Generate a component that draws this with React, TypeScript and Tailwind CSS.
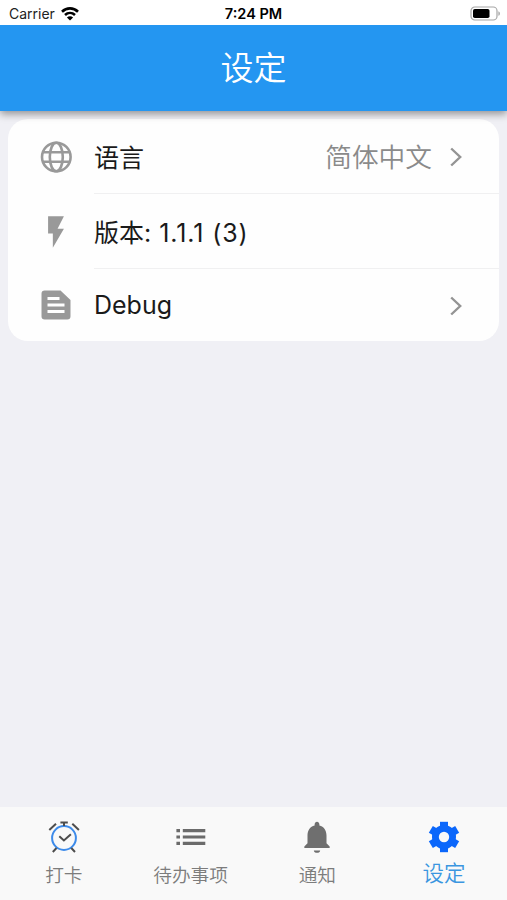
import clsx from "clsx";
import type { ReactNode } from "react";

interface SettingRowProps {
  icon: ReactNode;
  label: ReactNode;
  value?: string;
  hasLink?: boolean;
  isLast?: boolean;
}

interface TabProps {
  icon: ReactNode;
  label: string;
  active?: boolean;
}

const WifiIcon = () => (
  <svg width="18" height="14" viewBox="0 0 18 14" fill="none">
    <path
      d="M1 4.7C5.6.3 12.4.3 17 4.7M4 8c2.9-2.7 7.1-2.7 10 0"
      stroke="#000"
      strokeWidth="2.6"
    />
    <path d="M9 13.5 5.9 10.4c1.8-1.6 4.4-1.6 6.2 0z" fill="#000" />
  </svg>
);

const BatteryIcon = () => (
  <svg width="31" height="15" viewBox="0 0 31 15" fill="none">
    <rect x="1" y="1" width="26" height="13" rx="3.8" stroke="#a6a6a6" strokeWidth="1.2" />
    <rect x="3" y="3" width="16.5" height="9" rx="1.8" fill="#000" />
    <path d="M28.4 5.2c2 .8 2 3.8 0 4.6z" fill="#a6a6a6" />
  </svg>
);

const GlobeIcon = () => (
  <svg width="32" height="32" viewBox="0 0 32 32" fill="none" stroke="#999" strokeWidth="2.6">
    <circle cx="16.3" cy="16" r="14.3" />
    <ellipse cx="16.3" cy="16" rx="6.5" ry="14.3" />
    <path d="M3 11.2h26.6M3 20.8h26.6" />
  </svg>
);

const FlashIcon = () => (
  <svg width="38" height="38" viewBox="0 0 24 24" fill="#999">
    <path d="M7 2v11h3v9l7-12h-4l4-8z" />
  </svg>
);

const DocumentIcon = () => (
  <svg width="30" height="30" viewBox="0 0 30 30">
    <path
      d="M3.8.5h15.7L29.5 10v16.2a3.3 3.3 0 0 1-3.3 3.3H3.8a3.3 3.3 0 0 1-3.3-3.3V3.8A3.3 3.3 0 0 1 3.8.5z"
      fill="#999"
    />
    <path d="M6.5 8.5h12M6.5 15h17M6.5 21.5h17" stroke="#fff" strokeWidth="3" />
  </svg>
);

const ChevronIcon = () => (
  <svg width="12" height="20" viewBox="0 0 12 20" fill="none">
    <path d="m1.2 1.5 9 8.5-9 8.5" stroke="#949494" strokeWidth="2.4" />
  </svg>
);

const ClockIcon = () => (
  <svg width="32" height="32" viewBox="0 0 32 32" fill="none">
    <circle cx="16" cy="17" r="11.9" stroke="#3d8bea" strokeWidth="2" />
    <path
      d="M12.4 1.5h7.4M16 1.5v3.4M1.3 9 8 2.8M24.3 2.8l6.6 6.2M8.5 27l-3.7 4M23.3 27l3.7 4M11.3 15.2l4.6 4.3 7-6.3"
      stroke="#4d4d4d"
      strokeWidth="2"
    />
  </svg>
);

const ListIcon = () => (
  <svg width="30" height="32" viewBox="0 0 30 32">
    <path
      d="M.4 8.1H4v3.2H.4zM6.8 8.1h22.5v3.2H6.8zM.4 14.4H4v3.2H.4zM6.8 14.4h22.5v3.2H6.8zM.4 20.7H4v3.2H.4zM6.8 20.7h22.5v3.2H6.8z"
      fill="#6b6b6b"
    />
  </svg>
);

const BellIcon = () => (
  <svg width="38" height="38" viewBox="0 0 24 24" fill="#6f6f6f">
    <path d="M12 22c1.1 0 2-.7 2-1.5h-4c0 .8.9 1.5 2 1.5zm6-6v-5c0-3.1-1.6-5.6-4.5-6.3V4c0-.8-.7-1.7-1.5-1.7s-1.5.9-1.5 1.7v.7C7.6 5.4 6 7.9 6 11v5l-2 2v1h16v-1z" />
  </svg>
);

// hub and six square-ended teeth, one pair per bar
const GearIcon = () => (
  <svg width="32" height="32" viewBox="0 0 32 32">
    <g stroke="#0b67fb" strokeWidth="8">
      <path d="M16 .8v30.4" />
      <path d="M16 .8v30.4" transform="rotate(60 16 16)" />
      <path d="M16 .8v30.4" transform="rotate(120 16 16)" />
    </g>
    <circle cx="16" cy="16" r="12" fill="#0b67fb" />
    <circle cx="16" cy="16" r="5.2" fill="#f9f9f9" />
  </svg>
);

const StatusBar = () => (
  <div className="relative z-20 grid h-[25px] shrink-0 grid-cols-3 items-center bg-white px-1.5 pt-0.5 text-[#222]">
    <div className="flex items-center gap-1.5 pl-[3px] text-[14px]">
      <span>Carrier</span>
      <WifiIcon />
    </div>
    <span className="text-center text-[14.5px] font-semibold whitespace-nowrap text-black">
      7:24 PM
    </span>
    <div className="flex justify-end">
      <BatteryIcon />
    </div>
  </div>
);

const SettingRow = ({ icon, label, value, hasLink, isLast }: SettingRowProps) => (
  <li className={clsx("flex pl-7", isLast ? "h-[72px]" : "h-[75px]")}>
    <div className="flex w-10 shrink-0 items-center justify-center">{icon}</div>
    <div
      className={clsx(
        "ml-[18px] flex flex-1 items-center pr-[37px]",
        !isLast && "border-b border-[#f0f0f1]",
      )}
    >
      <span className={clsx("text-[25px] leading-none text-[#1a1a1a]", isLast ? "pt-px" : "pt-[5px]")}>
        {label}
      </span>
      {value && (
        <span className="ml-auto pt-[3px] text-[26.7px] leading-none font-[350] text-[#8a8a8a]">
          {value}
        </span>
      )}
      {hasLink && (
        <span className={clsx("pt-0.5", value ? "ml-[18px]" : "ml-auto")}>
          <ChevronIcon />
        </span>
      )}
    </div>
  </li>
);

const Tab = ({ icon, label, active }: TabProps) => (
  <div className="flex flex-col items-center pt-[11px] pl-px">
    <div className="flex h-[38px] items-center justify-center">{icon}</div>
    <span
      className={clsx(
        "mt-[5px] flex h-[26px] items-center leading-none font-[350]",
        active ? "text-[21.5px] text-[#3b96e0]" : "pt-1 text-[18.7px] text-[#7c7c7c]",
      )}
    >
      {label}
    </span>
  </div>
);

export default function App() {
  return (
    <div className="flex h-[900px] w-[507px] flex-col overflow-hidden bg-[#f0f0f5] font-['Inter','Noto_Sans_CJK_SC',sans-serif]">
      <StatusBar />
      <header className="relative z-10 flex h-[86px] shrink-0 items-center justify-center bg-[#2496f1] shadow-[0_3px_8px_rgba(0,0,0,0.4)]">
        <h1 className="text-[33px] leading-none font-[350] text-white">设定</h1>
      </header>
      <main className="flex-1 px-2 pt-2">
        <ul className="rounded-[20px] bg-[#fefefe]">
          <SettingRow icon={<GlobeIcon />} label="语言" value="简体中文" hasLink />
          <SettingRow
            icon={<FlashIcon />}
            label={
              <>
                版本: <span className="ml-px tracking-[0.9px]">1.1.1 (3)</span>
              </>
            }
          />
          <SettingRow icon={<DocumentIcon />} label="Debug" hasLink isLast />
        </ul>
      </main>
      <nav className="grid h-[93px] shrink-0 grid-cols-4 bg-[#f9f9f9]">
        <Tab icon={<ClockIcon />} label="打卡" />
        <Tab icon={<ListIcon />} label="待办事项" />
        <Tab icon={<BellIcon />} label="通知" />
        <Tab icon={<GearIcon />} label="设定" active />
      </nav>
    </div>
  );
}
